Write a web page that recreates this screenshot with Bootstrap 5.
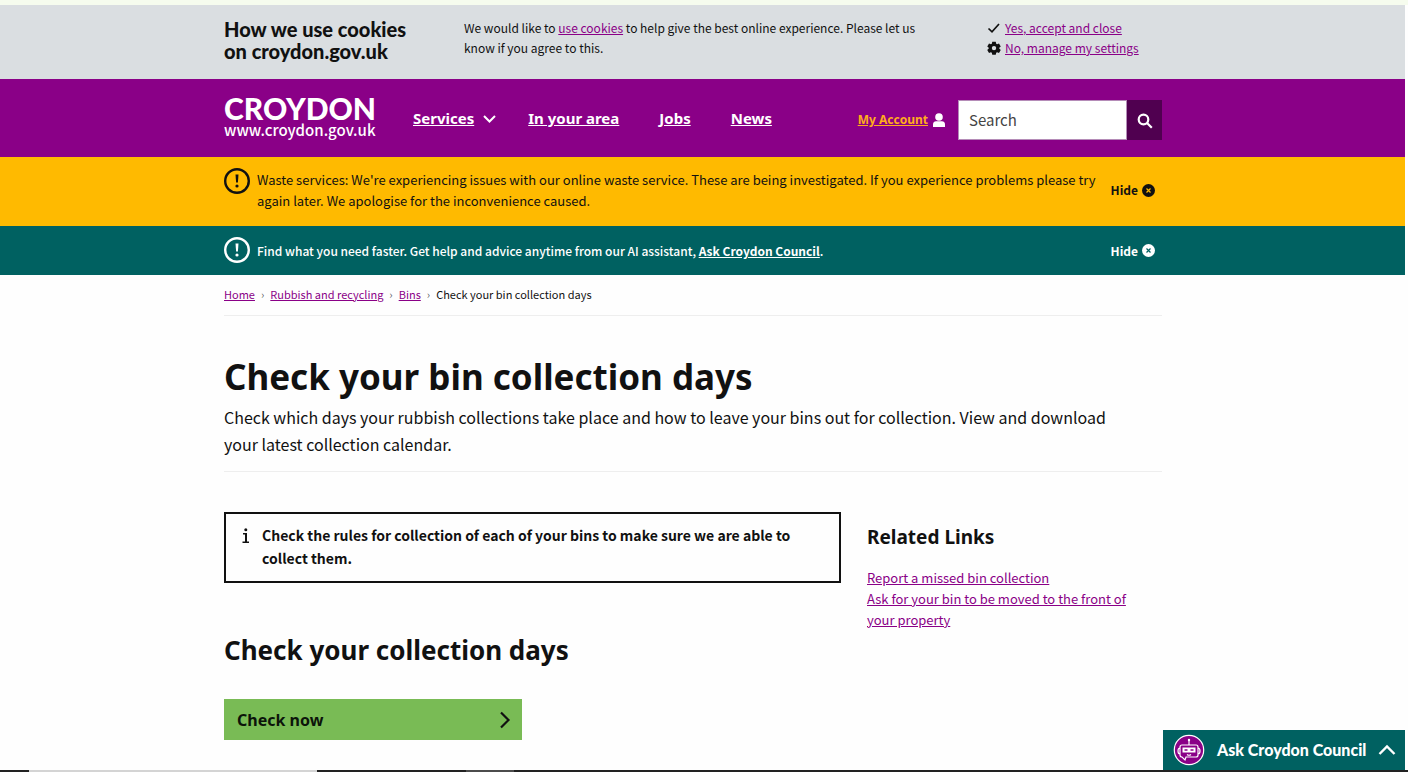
<!DOCTYPE html>
<html lang="en">
<head>
<meta charset="utf-8">
<meta name="viewport" content="width=device-width, initial-scale=1">
<title>Check your bin collection days | Croydon Council</title>
<link href="https://cdn.jsdelivr.net/npm/bootstrap@5.3.0/dist/css/bootstrap.min.css" rel="stylesheet">
<style>
  :root { --purple: #8a0087; --ink: #111; --teal: #006161; --display: "Noto Sans", "Open Sans", sans-serif; }
  body { font-family: "Noto Sans CJK SC", "Noto Sans", sans-serif; font-size: 13px; line-height: 21px; color: var(--ink); background: #fefefe; border-top: 5px solid #f6fcee; }
  a { color: var(--purple); }
  .page { margin-right: 3px; }
  .band { padding-right: 19px; }
  .wrap { max-width: 938px; margin: 0 auto; }
  .display-font { font-family: var(--display); font-weight: 700; }
  .cookies { background: #dadee1; font-size: 12px; line-height: 20px; padding-top: 13px; padding-bottom: 12px; }
  .cookies .wrap { min-height: 49px; }
  .cookies h2 { font: 900 20px/22px Lato, sans-serif; flex: 0 0 240px; margin: 0; }
  .cookies p { flex: 0 0 460px; margin: 0; }
  .cookies ul { margin-left: 63px; }
  .masthead { background: var(--purple); padding-top: 16px; padding-bottom: 16px; }
  .logo { flex: 0 0 189px; color: #fff; text-decoration: none; padding-bottom: 2px; }
  .logo-name { font: 900 30px/26px Lato, sans-serif; }
  .logo-url { font: 500 15px/18px "Noto Sans CJK SC", sans-serif; }
  .main-nav a { color: #fff; font: 700 15px/20px var(--display); }
  .account { color: #ffac1c; font: 700 12px/20px var(--display); }
  .search .form-control { width: 169px; height: 40px; border: 1px solid #b58cb8; font-size: 15px; line-height: 20px; padding: 0 10px 2px; color: #333; }
  .search .form-control::placeholder { color: #444; opacity: 1; }
  .search .btn { width: 35px; height: 40px; background: #500050; padding: 0 0 4px; }
  .notice-waste { background: #ffba00; padding-top: 12px; padding-bottom: 15px; }
  .notice-ai { background: var(--teal); color: #fff; font-size: 12px; font-weight: 500; padding-top: 12px; padding-bottom: 12px; }
  .notice-ai a, .notice-ai .hide-btn { color: #fff; }
  .notice-ai a { font-weight: 700; }
  .notice svg.alert-mark { margin: -1px 7px 0 0; }
  .notice-text { max-width: 846px; }
  .hide-btn { font-size: 12px; font-weight: 700; line-height: 20px; margin-right: 7px; color: var(--ink); }
  .crumbs { --bs-breadcrumb-divider: "›"; --bs-breadcrumb-item-padding-x: 6px; --bs-breadcrumb-font-size: 11px; font-size: 11px; line-height: 20px; padding: 9px 0 11px; margin: 0; }
  .crumbs .active { color: var(--ink); }
  .ruled { border-bottom: 1px solid #eee; }
  .intro { padding: 38px 0 13px; }
  .intro h1 { font-size: 35px; line-height: 46px; margin: 0 0 4px; }
  .intro p { font-size: 16px; line-height: 27px; margin: 0; max-width: 900px; }
  .content { padding-top: 40px; display: grid; grid-template-columns: 617px 1fr; column-gap: 26px; }
  .tip { border: 2px solid var(--ink); padding: 10px 14px 11px 16px; font-size: 14px; line-height: 23px; font-weight: 700; gap: 12px; }
  .content h2 { font-size: 26px; line-height: 34px; margin: 50px 0 32px; }
  .cta { background: #79bb55; color: #0c140a; width: 298px; height: 41px; font-size: 16px; padding: 0 11px 0 13px; border: 0; border-radius: 0; text-decoration: none; }
  .related h3 { font-size: 19px; line-height: 26px; margin: 12px 0 17px; }
  .related li { line-height: 21px; max-width: 270px; }
  .chat { position: fixed; right: 3px; bottom: 2px; width: 242px; height: 40px; background: var(--teal); color: #fff; border: 0; font: 900 16px/20px Lato, sans-serif; padding: 0 9px 0 10px; }
  .edge { position: fixed; left: 0; right: 0; bottom: 0; height: 2px; background: #222; }
  .edge span { display: block; height: 2px; }
  .edge .tab-open { margin-left: 29px; width: 288px; background: #d4d4d4; }
  .edge .tab-idle { margin-left: 149px; width: 48px; background: #4c4c4c; }
</style>
<script src="https://cdn.jsdelivr.net/npm/bootstrap@5.3.0/dist/js/bootstrap.bundle.min.js"></script>
</head>
<body>
<div class="page">
  <section class="cookies band" aria-label="Cookies">
    <div class="wrap d-flex">
      <h2>How we use cookies<br>on croydon.gov.uk</h2>
      <p>We would like to <a href="#">use cookies</a> to help give the best online experience. Please let us know if you agree to this.</p>
      <ul class="list-unstyled mb-0">
        <li class="d-flex align-items-center gap-1">
          <svg width="14" height="12" viewBox="0 0 14 12" fill="none" stroke="#111" stroke-width="1.700"><path d="M1.500 6.500 5 9.800l7-7.800"/></svg>
          <a href="#">Yes, accept and close</a></li>
        <li class="d-flex align-items-center gap-1">
          <svg width="14" height="14" viewBox="0 0 16 16" fill="#111"><path fill-rule="evenodd" d="M6 .8h4l.5 2.300 1 .6 2.200-.8 2 3.400-1.700 1.500v.9l1.700 1.500-2 3.400-2.200-.8-1 .6-.5 2.300H6l-.5-2.300-1-.6-2.200.8-2-3.400L2 8.700v-.9L.3 6.300l2-3.400 2.200.8 1-.6zM8 5.600a2.500 2.500 0 1 0 0 5 2.500 2.500 0 0 0 0-5z"/></svg>
          <a href="#">No, manage my settings</a></li>
      </ul>
    </div>
  </section>

  <header class="masthead band">
    <div class="wrap d-flex align-items-center">
      <a class="logo d-flex flex-column" href="#"><span class="logo-name">CROYDON</span><span class="logo-url">www.croydon.gov.uk</span></a>
      <nav class="main-nav d-flex align-items-center" aria-label="Main">
        <a href="#">Services</a>
        <svg class="ms-2 me-4" width="18" height="12" viewBox="0 0 18 12" fill="none" stroke="#fff" stroke-width="2"><path d="M2 4l5.500 5.500L13 4"/></svg>
        <a class="ms-1 me-3" href="#">In your area</a>
        <a class="mx-4" href="#">Jobs</a>
        <a class="ms-3" href="#">News</a>
      </nav>
      <div class="d-flex align-items-center ms-auto pt-1">
        <a class="account" href="#">My Account</a>
        <svg class="mx-1" width="14" height="14" viewBox="0 0 14 14" fill="#fff"><circle cx="7" cy="4" r="3.800"/><path d="M1 14v-2.500C1 9.300 2.500 8.300 4 8.300h6c1.500 0 3 1 3 3.200V14z"/></svg>
        <form class="search d-flex ms-1 ps-1" role="search">
          <input class="form-control rounded-0" type="search" placeholder="Search" aria-label="Search">
          <button class="btn rounded-0" type="button" aria-label="Search"><svg width="16" height="16" viewBox="0 0 16 16" fill="none" stroke="#fff" stroke-width="2.200"><circle cx="6.500" cy="6.500" r="4.800"/><path d="M10 10l4.800 4.800"/></svg></button>
        </form>
      </div>
    </div>
  </header>

  <section class="notice notice-waste band" aria-label="Waste services notice">
    <div class="wrap d-flex align-items-start">
      <svg class="alert-mark flex-shrink-0" width="26" height="26" viewBox="0 0 26 26"><circle cx="13" cy="13" r="11.800" fill="none" stroke="#111" stroke-width="2.400"/><path d="M11.500 6.500h3l-.6 8h-1.800z" fill="#111"/><circle cx="13" cy="18" r="1.600" fill="#111"/></svg>
      <div class="notice-text">Waste services: We're experiencing issues with our online waste service. These are being investigated. If you experience problems please try again later. We apologise for the inconvenience caused.</div>
      <button class="btn hide-btn border-0 p-0 ms-auto d-flex align-items-center align-self-center gap-1" type="button">Hide <svg width="13" height="13" viewBox="0 0 13 13"><circle cx="6.500" cy="6.500" r="6.500" fill="#111"/><path d="M4.500 4.500l4 4m0-4l-4 4" stroke="#ffba00" stroke-width="1.200"/></svg></button>
    </div>
  </section>

  <section class="notice notice-ai band" aria-label="AI assistant notice">
    <div class="wrap d-flex align-items-center">
      <svg class="alert-mark flex-shrink-0" width="26" height="26" viewBox="0 0 26 26"><circle cx="13" cy="13" r="11.800" fill="none" stroke="#fff" stroke-width="2.400"/><path d="M11.500 6.500h3l-.6 8h-1.800z" fill="#fff"/><circle cx="13" cy="18" r="1.600" fill="#fff"/></svg>
      <div class="notice-text">Find what you need faster. Get help and advice anytime from our AI assistant, <a href="#">Ask Croydon Council</a>.</div>
      <button class="btn hide-btn border-0 p-0 ms-auto d-flex align-items-center align-self-center gap-1" type="button">Hide <svg width="13" height="13" viewBox="0 0 13 13"><circle cx="6.500" cy="6.500" r="6.500" fill="#fff"/><path d="M4.500 4.500l4 4m0-4l-4 4" stroke="#006161" stroke-width="1.200"/></svg></button>
    </div>
  </section>

  <main class="band">
    <div class="wrap">
      <nav class="ruled" aria-label="Breadcrumb">
        <ol class="breadcrumb crumbs">
          <li class="breadcrumb-item"><a href="#">Home</a></li>
          <li class="breadcrumb-item"><a href="#">Rubbish and recycling</a></li>
          <li class="breadcrumb-item"><a href="#">Bins</a></li>
          <li class="breadcrumb-item active" aria-current="page">Check your bin collection days</li>
        </ol>
      </nav>
      <div class="intro ruled">
        <h1 class="display-font">Check your bin collection days</h1>
        <p>Check which days your rubbish collections take place and how to leave your bins out for collection. View and download your latest collection calendar.</p>
      </div>
      <div class="content">
        <div>
          <div class="tip d-flex">
            <svg class="flex-shrink-0 mt-1" width="8" height="16" viewBox="0 0 8 16" fill="#111"><circle cx="3.800" cy="1.700" r="1.500"/><path d="M1 5h4v8.500h2V15H.5v-1.500H3v-7H1z"/></svg>
            <div>Check the rules for collection of each of your bins to make sure we are able to collect them.</div>
          </div>
          <h2 class="display-font">Check your collection days</h2>
          <a class="btn cta display-font d-flex align-items-center justify-content-between" href="#">Check now
            <svg width="12" height="18" viewBox="0 0 12 18" fill="none" stroke="#111" stroke-width="2.200"><path d="M2 1.500L9.500 9 2 16.500"/></svg></a>
        </div>
        <aside class="related">
          <h3 class="display-font">Related Links</h3>
          <ul class="list-unstyled mb-0">
            <li><a href="#">Report a missed bin collection</a></li>
            <li><a href="#">Ask for your bin to be moved to the front of your property</a></li>
          </ul>
        </aside>
      </div>
    </div>
  </main>
</div>

<button class="chat d-flex align-items-center" type="button">
  <svg class="me-2" width="32" height="32" viewBox="0 0 32 32"><circle cx="16" cy="16" r="14.700" fill="#8a0087" stroke="#fff" stroke-width="1.200"/><g fill="none" stroke="#fff" stroke-width="1.200"><path d="M16 6v5M9 11h14q2 0 2 2v8q0 2-2 2H13l-1 3-3-3q-2 0-2-2v-8q0-2 2-2zM7 14q-2 0-2 3t2 3M25 14q2 0 2 3t-2 3"/><path d="M14 20.500q2 1.500 4 0"/></g><circle cx="16" cy="6" r="1.200" fill="#fff"/><rect x="9.500" y="13.500" width="13" height="5" fill="#fff"/><path d="M11.500 16h3m3 0h3" stroke="#8a0087" stroke-width="1.500"/></svg>
  <span class="ms-1">Ask Croydon Council</span>
  <svg class="ms-auto" width="18" height="12" viewBox="0 0 18 12" fill="none" stroke="#fff" stroke-width="2.400"><path d="M1.500 10L9 2.500l7.500 7.500"/></svg>
</button>
<div class="edge d-flex"><span class="tab-open"></span><span class="tab-idle"></span></div>
</body>
</html>
